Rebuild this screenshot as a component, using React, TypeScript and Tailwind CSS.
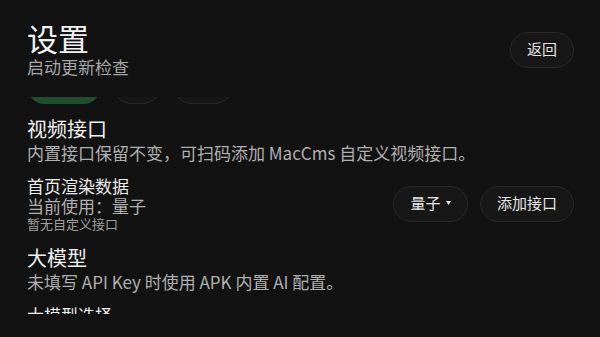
import React from "react";

const font = { fontFamily: '"Noto Sans CJK SC", "Noto Sans", sans-serif' };

const Pill: React.FC<{ children: React.ReactNode; className?: string }> = ({ children, className }) => (
  <button
    className={
      "h-9 rounded-full border border-[#2a2a2a] bg-[#171717] text-[15px] text-[#e6e6e6] flex items-center justify-center " +
      (className ?? "")
    }
  >
    {children}
  </button>
);

const App: React.FC = () => {
  return (
    <div
      className="h-[337px] w-[600px] bg-[#121212] flex flex-col pl-[27px] pr-[26px] overflow-hidden"
      style={font}
    >
      {/* Header */}
      <header className="flex items-center justify-between pt-[19px] shrink-0">
        <div>
          <h1 className="text-[31px] leading-[38px] text-[#f2f2f2]">设置</h1>
          <p className="text-[17px] leading-[20px] text-[#a6a6a6]">启动更新检查</p>
        </div>
        <Pill className="w-16 mt-[3px]">返回</Pill>
      </header>

      {/* Scroll area */}
      <div className="mt-[20px] h-[217px] overflow-hidden shrink-0">
        <div className="-mt-[29px]">
          <div className="flex gap-3">
            <div className="h-9 w-[74px] rounded-full bg-[#1f4f2e]" />
            <div className="h-9 w-[48px] rounded-full border border-[#2a2a2a] bg-[#171717]" />
            <div className="h-9 w-[60px] rounded-full border border-[#2a2a2a] bg-[#171717]" />
          </div>

          <section className="mt-[12px]">
            <h2 className="text-[20px] leading-[26px] text-[#f0f0f0]">视频接口</h2>
            <p className="text-[17px] leading-[22px] text-[#b0b0b0]">
              内置接口保留不变，可扫码添加 MacCms 自定义视频接口。
            </p>
          </section>

          <div className="mt-[12px] flex items-center justify-between">
            <div>
              <div className="text-[17px] leading-[20px] text-[#ececec]">首页渲染数据</div>
              <div className="text-[17px] leading-[20px] text-[#b0b0b0]">当前使用：量子</div>
              <div className="text-[13px] leading-[15px] text-[#a0a0a0]">暂无自定义接口</div>
            </div>
            <div className="flex gap-3">
              <Pill className="w-[75px] gap-[5px]">
                量子
                <svg width="5" height="4" viewBox="0 0 5 4" className="-mt-[2px]">
                  <path d="M0 0h5L2.5 4z" fill="#e6e6e6" />
                </svg>
              </Pill>
              <Pill className="w-[94px]">添加接口</Pill>
            </div>
          </div>

          <section className="mt-[14px]">
            <h2 className="text-[20px] leading-[26px] text-[#f0f0f0]">大模型</h2>
            <p className="text-[17px] leading-[22px] text-[#b0b0b0]">
              未填写 API Key 时使用 APK 内置 AI 配置。
            </p>
          </section>

          <div className="mt-[12px] text-[17px] leading-[20px] text-[#ececec]">大模型选择</div>
        </div>
      </div>
    </div>
  );
};

export default App;
